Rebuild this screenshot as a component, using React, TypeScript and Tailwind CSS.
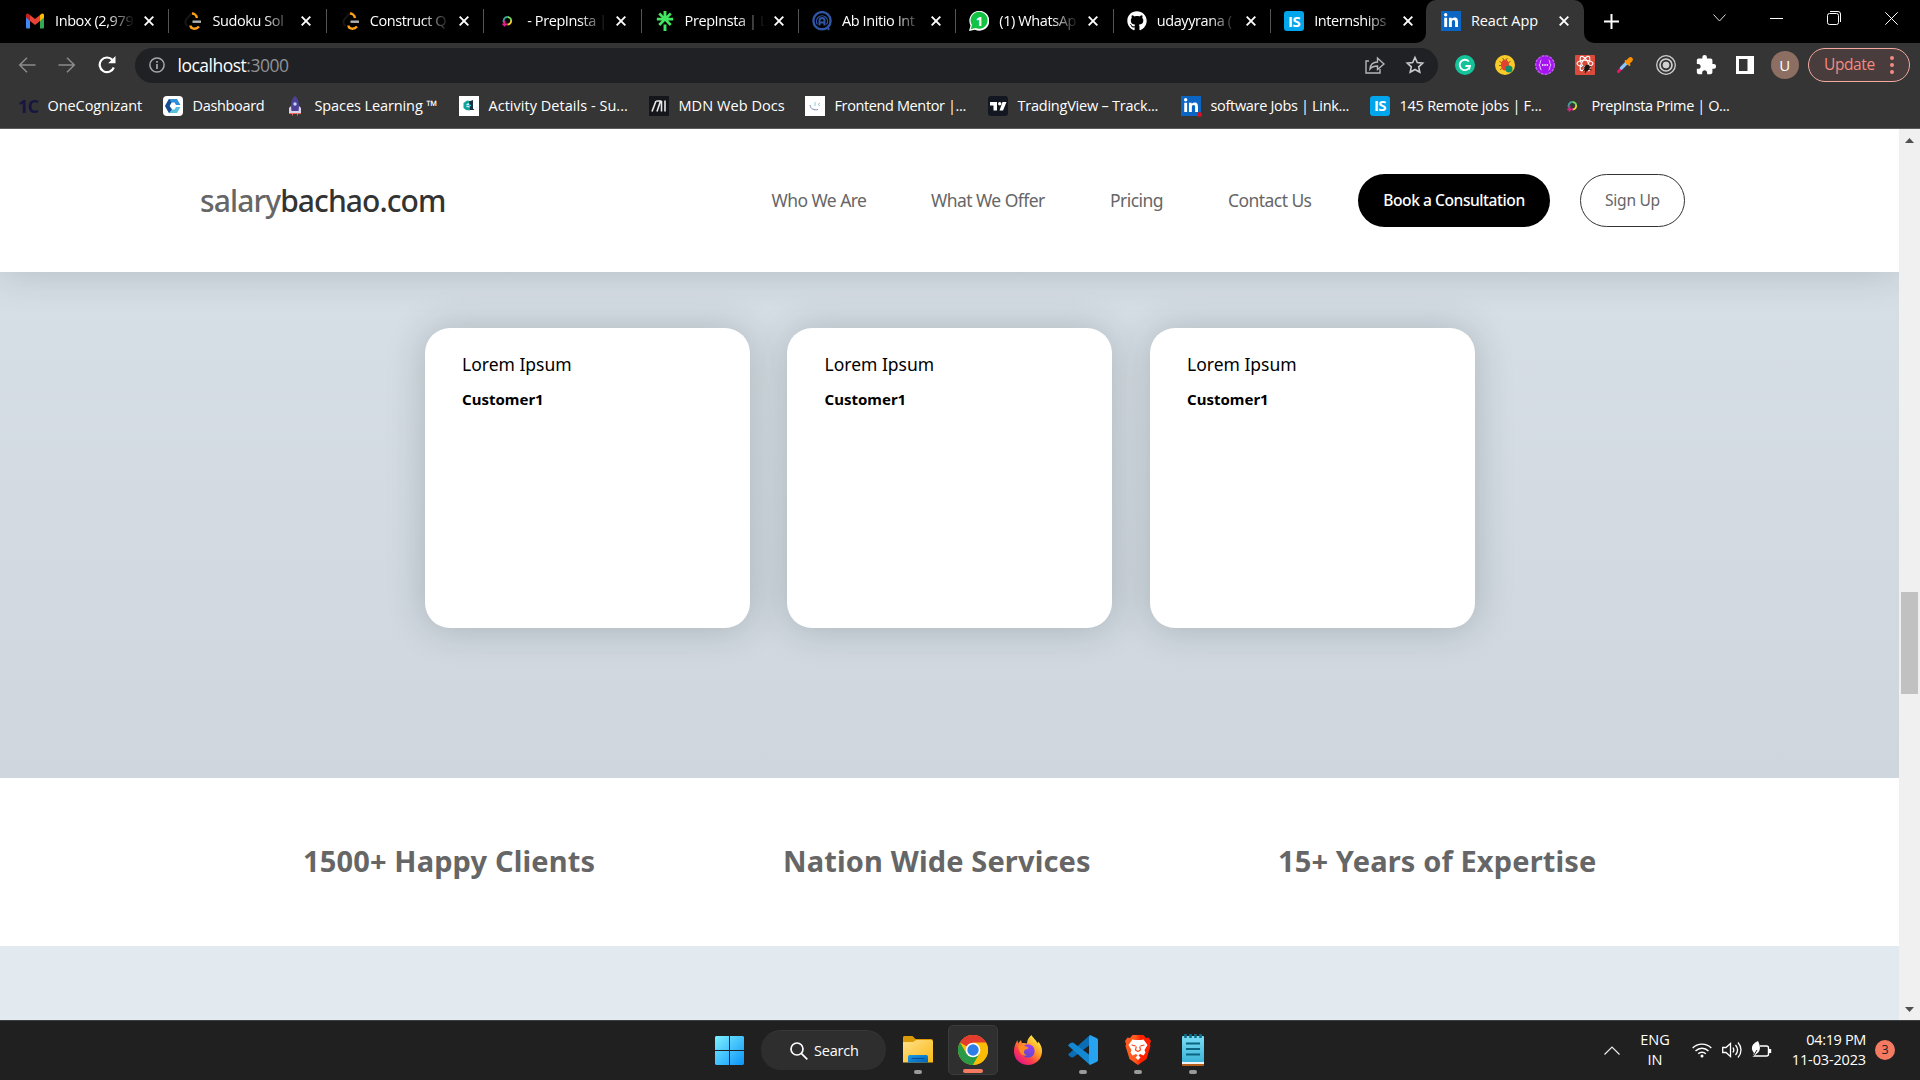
import type { ReactNode } from "react";
import { SiLinktree } from "react-icons/si";
import { FaGithub, FaLinkedinIn } from "react-icons/fa";
import { MdExtension } from "react-icons/md";

const ui = "font-['Open_Sans',sans-serif]";
const web = "font-['Noto_Sans',sans-serif]";

const Gmail = () => (
  <svg viewBox="0 0 20 16" className="h-4 w-5">
    <path d="M1 3.5V14.5a1 1 0 0 0 1 1h3V6z" fill="#4285f4" />
    <path d="M19 3.5V14.5a1 1 0 0 1-1 1h-3V6z" fill="#34a853" />
    <path d="M15 6V2l1.400-1C17.800 0 19 1 19 2.400V4.500L15 8z" fill="#fbbc04" />
    <path d="M5 8V2l5 4 5-4v6l-5 4z" fill="#ea4335" />
    <path d="M1 4.500V2.400C1 1 2.200 0 3.600 1L5 2v6z" fill="#c5221f" />
  </svg>
);

const LeetCode = () => (
  <svg viewBox="0 0 20 20" className="h-5 w-5" fill="none">
    <path d="M10 2 4.500 8C3 10.500 3 13 5.500 15" stroke="#161616" strokeWidth="2" />
    <path d="M10 2.500c2 0 4.500 1.500 5 4.500" stroke="#ffa116" strokeWidth="2.400" />
    <path d="M10.500 10.700h8.500" stroke="#b3b3b3" strokeWidth="2.400" />
    <path d="M8.500 14.500c0 3.500 5.500 4.500 8.500 1" stroke="#ffa116" strokeWidth="2.400" />
  </svg>
);

const Prep = () => (
  <svg viewBox="0 0 20 20" className="h-5 w-5" fill="none" strokeWidth="1.800">
    <path d="M7 11.500a3.800 3.800 0 0 1 3.500-5.500" stroke="#35a7a0" />
    <path d="M10.500 6a3.800 3.800 0 0 1 3.700 4" stroke="#7ed957" />
    <path d="M14.200 9.500a3.800 3.800 0 0 1-3.700 4" stroke="#f6d32d" />
    <path d="M11 13.300H5.300M7.500 9.500v6" stroke="#e0218a" />
  </svg>
);

const Linktree = () => <SiLinktree className="h-5 w-5 text-[#43e660]" />;

const Ambition = () => (
  <svg viewBox="0 0 20 20" className="h-5 w-5" fill="none" stroke="#3055a5">
    <circle cx="10" cy="9.700" r="8.600" strokeWidth="2.400" />
    <path d="M7.500 14.500V9.500a2.500 2.500 0 0 1 5 0v5M7.500 11.500h5" strokeWidth="2" />
    <path d="M5.500 13.500a5.500 5.500 0 1 1 9 0" strokeWidth="1.300" />
    <path d="M16 17l1 2" strokeWidth="2" />
  </svg>
);

const WhatsApp = () => (
  <span className="relative flex h-5 w-5 items-center justify-center">
    <svg viewBox="0 0 20 20" className="absolute h-5 w-5">
      <path d="M0 20 1.500 14.500A10 10 0 1 1 6 18.800z" fill="#fff" />
      <path d="M1.600 18.300 3 14A8.500 8.500 0 1 1 6.500 17z" fill="#13c143" />
    </svg>
    <b className="relative text-[13px] leading-none text-white">1</b>
  </span>
);

const Github = () => <FaGithub className="h-5 w-5 text-white" />;

const Internshala = () => (
  <span className="flex h-5 w-5 items-center justify-center rounded-[3px] bg-[#00a5ec] text-[15px] font-bold leading-none tracking-[-0.5px] text-white">
    IS
  </span>
);

const LinkedIn = ({ dot }: { dot?: boolean }) => (
  <span className="relative flex h-5 w-5 items-center justify-center bg-[#0a66c2]">
    <FaLinkedinIn className="h-4 w-4 text-white" />
    {dot && <span className="absolute -bottom-px -right-px h-[5px] w-[5px] rounded-full bg-[#d11124]" />}
  </span>
);

const Cross = ({ className }: { className: string }) => (
  <svg viewBox="0 0 10 10" className={className} stroke="#fff" strokeWidth="1.900">
    <path d="M.7.7l8.600 8.600M9.300.7.7 9.300" />
  </svg>
);

const tabs: { title: string; icon: ReactNode }[] = [
  { title: "Inbox (2,979", icon: <Gmail /> },
  { title: "Sudoku Sol", icon: <LeetCode /> },
  { title: "Construct Q", icon: <LeetCode /> },
  { title: "- PrepInsta |", icon: <Prep /> },
  { title: "PrepInsta | L", icon: <Linktree /> },
  { title: "Ab Initio Int", icon: <Ambition /> },
  { title: "(1) WhatsAp", icon: <WhatsApp /> },
  { title: "udayyrana (", icon: <Github /> },
  { title: "Internships", icon: <Internshala /> },
];

function TabStrip() {
  return (
    <div className="flex h-[43px] bg-black pl-[12px]">
      {tabs.map((t, i) => (
        <div key={i} className="flex w-[157.400px] shrink-0 items-center pb-px pl-[13px]">
          <span className="flex w-5 justify-center">{t.icon}</span>
          <span className="ml-[10px] w-[80px] whitespace-nowrap text-[14.500px] tracking-[-0.4px] [mask-image:linear-gradient(to_right,black_65%,transparent_100%)]">
            {t.title}
          </span>
          <Cross className="ml-[9px] h-[10px] w-[10px]" />
          <span className={i < 8 ? "ml-auto h-6 w-px bg-[#555]" : "hidden"} />
        </div>
      ))}
      <div className="relative ml-[-2.600px] flex w-[158px] shrink-0 items-center rounded-t-[10px] bg-[#353535] pb-px pl-[15px]">
        <svg viewBox="0 0 10 10" className="absolute -left-[10px] bottom-0 h-[10px] w-[10px]" fill="#353535">
          <path d="M10 0v10H0A10 10 0 0 0 10 0" />
        </svg>
        <svg viewBox="0 0 10 10" className="absolute -right-[10px] bottom-0 h-[10px] w-[10px]" fill="#353535">
          <path d="M0 0v10h10A10 10 0 0 1 0 0" />
        </svg>
        <LinkedIn />
        <span className="ml-[10px] w-[88px] whitespace-nowrap text-[14.500px] tracking-[-0.1px]">React App</span>
        <Cross className="h-[10px] w-[10px]" />
      </div>
      <div className="flex grow items-center">
        <svg viewBox="0 0 15 15" className="ml-[20px] h-[15px] w-[15px]" stroke="#fff" strokeWidth="2">
          <path d="M7.500 0v15M0 7.500h15" />
        </svg>
        <div className="mb-[7px] ml-auto mr-[22px] flex w-[185px] items-center justify-between">
          <svg viewBox="0 0 13 8" className="h-2 w-[13px]" fill="none" stroke="#ddd">
            <path d="M.5.5l6 6.500 6-6.500" />
          </svg>
          <span className="h-px w-[13px] bg-white" />
          <svg viewBox="0 0 14 14" className="h-[14px] w-[14px]" fill="none" stroke="#fff">
            <rect x=".5" y="2.500" width="11" height="11" rx="2" />
            <path d="M3 .5h8a2.500 2.500 0 0 1 2.500 2.500v8" />
          </svg>
          <svg viewBox="0 0 13 13" className="h-[13px] w-[13px]" stroke="#fff">
            <path d="M.3.3l12.400 12.400M12.700.3.3 12.700" />
          </svg>
        </div>
      </div>
    </div>
  );
}

const extensions: ReactNode[] = [
  <svg viewBox="0 0 20 20" className="h-5 w-5">
    <circle cx="10" cy="10" r="10" fill="#15c39a" />
    <path d="M13.800 6.500A5.200 5.200 0 1 0 15 11h-4.500M15 11l-1 3.500" fill="none" stroke="#fff" strokeWidth="1.800" />
  </svg>,
  <svg viewBox="0 0 20 20" className="h-5 w-5">
    <circle cx="10" cy="10" r="10" fill="#f9cb28" />
    <path d="M4.500 6.500l3 1.500M4 10.500h3M5 15l2.500-2M15.500 6.500l-3 1.500M7.500 3l1.500 2M12.500 3l-1.500 2" stroke="#8b5a2b" />
    <ellipse cx="10" cy="10" rx="4" ry="5.500" fill="#e0432f" />
    <circle cx="14" cy="14" r="3.500" fill="#0c8f68" />
    <circle cx="12.500" cy="12" r="1.200" fill="#0c8f68" />
  </svg>,
  <svg viewBox="0 0 20 20" className="h-5 w-5">
    <circle cx="10" cy="10" r="9.300" fill="#a414ef" stroke="#c05af5" strokeWidth="1.400" strokeDasharray="3 1" />
    <path d="M6.500 5C4.500 5 6 9 4 10c2 1 .5 5 2.500 5M13.500 5c2 0 .5 4 2.500 5-2 1-.5 5-2.500 5" fill="none" stroke="#e5c7ff" />
    <path d="M7 10h1.500M9.300 10h1.500M11.600 10h1.500" stroke="#fff" strokeWidth="1.500" />
  </svg>,
  <svg viewBox="0 0 20 20" className="h-5 w-5">
    <rect width="20" height="20" rx="1" fill="#dc4a3a" />
    <g fill="none" stroke="#fff" strokeWidth="1.100">
      <ellipse cx="10" cy="8.500" rx="8" ry="3.200" />
      <ellipse cx="10" cy="8.500" rx="8" ry="3.200" transform="rotate(60 10 8.500)" />
      <ellipse cx="10" cy="8.500" rx="8" ry="3.200" transform="rotate(120 10 8.500)" />
    </g>
    <ellipse cx="12" cy="13" rx="2.500" ry="3.500" fill="#1d1311" transform="rotate(25 12 13)" />
    <path d="M7.500 11.500l9 3.500M8 15.500l8-4M10 18l3-8" stroke="#1d1311" />
  </svg>,
  <svg viewBox="0 0 20 20" className="h-5 w-5" strokeLinecap="round">
    <path d="M3.500 16.500l2.500-3" stroke="#e5186a" strokeWidth="3" />
    <path d="M6.500 13l5-5" stroke="#8fc4ff" strokeWidth="3.200" />
    <path d="M13 7l2.500-2.500" stroke="#ff9100" strokeWidth="4.800" />
    <path d="M10.500 6l4 4" stroke="#ff9100" strokeWidth="1.800" />
  </svg>,
  <svg viewBox="0 0 20 20" className="h-5 w-5" fill="none" stroke="#d0d0d0">
    <circle cx="10" cy="10" r="9.300" strokeWidth="1.300" />
    <circle cx="10" cy="10" r="6" strokeWidth="1.700" />
    <circle cx="10" cy="10" r="3" fill="#d0d0d0" />
  </svg>,
  <MdExtension className="h-[22px] w-[22px] text-white" />,
  <svg viewBox="0 0 18 18" className="mr-[2px] h-[18px] w-[18px]">
    <path d="M0 0h18v18H0zM3 3v12h8.500V3z" fill="#fff" fillRule="evenodd" />
  </svg>,
];

function Toolbar() {
  return (
    <div className="flex h-[44px] items-center bg-[#353535] pl-[18px] pr-[10px]">
      <svg viewBox="0 0 18 16" className="h-4 w-[18px]" fill="none" stroke="#8b8b8b" strokeWidth="1.500">
        <path d="M17.500 8H2M9 .8 1.700 8 9 15.200" />
      </svg>
      <svg viewBox="0 0 18 16" className="ml-[22px] h-4 w-[18px]" fill="none" stroke="#8b8b8b" strokeWidth="1.500">
        <path d="M.5 8H16M9 .8 16.300 8 9 15.200" />
      </svg>
      <svg viewBox="0 0 18 18" className="ml-[22px] h-[18px] w-[18px]" fill="none" stroke="#fff" strokeWidth="2.200">
        <path d="M15.800 11.500A7.300 7.300 0 1 1 14.500 4" />
        <path d="M17.500 0v7.300h-7.300z" fill="#fff" stroke="none" />
      </svg>
      <div className="ml-[19px] flex h-[35px] w-[1303px] shrink-0 items-center rounded-full bg-[#202124] pl-[14px] pr-[13px]">
        <svg viewBox="0 0 16 16" className="h-4 w-4" fill="none" stroke="#a5a8ac">
          <circle cx="8" cy="8" r="7.100" strokeWidth="1.500" />
          <path d="M8 7v5M8 4v1.700" strokeWidth="1.700" />
        </svg>
        <span className="ml-[12.500px] text-[17.500px] tracking-[-0.500px] text-white">
          localhost<span className="text-[#909296]">:3000</span>
        </span>
        <svg viewBox="0 0 20 18" className="ml-auto h-[18px] w-5" fill="none" stroke="#b5b7ba" strokeWidth="1.400">
          <path d="M4 5H1v12h14v-4" />
          <path d="M5 13c.5-5 3.500-7 7.500-7V2l6.500 6-6.500 5.500V10C9.500 10 7 10.500 5 13z" />
        </svg>
        <svg viewBox="0 0 20 20" className="ml-[20px] h-5 w-5" fill="none" stroke="#c8cacd" strokeWidth="1.600">
          <path d="M10 2.500l2.300 5 5.400.6-4 3.700 1.100 5.400-4.800-2.700-4.800 2.700 1.100-5.400-4-3.700 5.400-.6z" />
        </svg>
      </div>
      <div className="ml-[7px] flex">
        {extensions.map((e, i) => (
          <span key={i} className="flex w-[40.100px] items-center justify-center">
            {e}
          </span>
        ))}
      </div>
      <span className="ml-[5px] flex h-7 w-7 shrink-0 items-center justify-center rounded-full bg-[#8d6e63] text-[15px] text-white">
        U
      </span>
      <div className="ml-auto flex h-[34px] w-[102px] shrink-0 items-center rounded-full border border-[#f1a9a0] bg-[#493c3c] pl-[15px] text-[15.500px] tracking-[-0.4px] text-[#f28b82]">
        Update
        <span className="ml-auto mr-[15px] flex flex-col gap-[3px]">
          <i className="h-1 w-1 rounded-full bg-[#f28b82]" />
          <i className="h-1 w-1 rounded-full bg-[#f28b82]" />
          <i className="h-1 w-1 rounded-full bg-[#f28b82]" />
        </span>
      </div>
    </div>
  );
}

const bookmarks: { w: string; title: string; icon: ReactNode }[] = [
  {
    w: "w-[145px] tracking-[-0.07px]",
    title: "OneCognizant",
    icon: <span className="text-[18px] font-bold leading-none tracking-[-1px] text-[#15153f]">1C</span>,
  },
  {
    w: "w-[122px] tracking-[-0.33px]",
    title: "Dashboard",
    icon: (
      <svg viewBox="0 0 20 20" className="h-5 w-5">
        <rect width="20" height="20" rx="4" fill="#fff" />
        <path d="M6 3h8l3.500 6H13l-1.500-2.500H8.500L6.500 10 2 10z" fill="#2f8fd8" />
        <path d="M2 10l4 7h8l3.500-6H13l-1.500 2.500H9L6.500 10z" fill="#58c1e0" />
        <path d="M6 3 2 10l4 7 3-3.500L6.500 10l2-3.500z" fill="#1a4c94" />
      </svg>
    ),
  },
  {
    w: "w-[174px] tracking-[-0.1px]",
    title: "Spaces Learning ™",
    icon: (
      <svg viewBox="0 0 20 20" className="h-5 w-5">
        <path d="M4 18v-6l3-3h6l3 3v6z" fill="#d8d3ea" />
        <path d="M10 0c4 3.500 4.500 8 3.500 15h-7C5.500 8 6 3.500 10 0z" fill="#4f4096" />
        <circle cx="10" cy="8" r="1.700" fill="#b9d8ff" />
        <path d="M4 17.500h12M7.500 17.500v2M12.500 17.500v2" stroke="#e96a5a" />
      </svg>
    ),
  },
  {
    w: "w-[190px] tracking-[0.03px]",
    title: "Activity Details - Su...",
    icon: (
      <svg viewBox="0 0 20 20" className="h-5 w-5">
        <rect width="20" height="20" fill="#fff" />
        <path d="M4.500 7 8 4.500l3 .5v2L7.500 8v3l3.500.5v3l-4-.5L4.500 12z" fill="#14a39a" />
        <path d="M10 5.500 14 4v8.500l1.500 1.500H11z" fill="#17323f" />
        <path d="M7 9.500h5" stroke="#2bc0d8" strokeWidth="1.500" />
      </svg>
    ),
  },
  {
    w: "w-[156px] tracking-[0.07px]",
    title: "MDN Web Docs",
    icon: (
      <svg viewBox="0 0 20 20" className="h-5 w-5" stroke="#e8e8e8" strokeWidth="1.600" fill="none">
        <rect width="20" height="20" fill="#15151c" stroke="none" />
        <path d="M3 15.500 7 5M8 15.500 11.500 5 7.300 5M12.500 15.500V5M16 4.500v11" />
      </svg>
    ),
  },
  {
    w: "w-[183px] tracking-[-0.38px]",
    title: "Frontend Mentor |...",
    icon: (
      <svg viewBox="0 0 20 20" className="h-5 w-5" fill="none">
        <rect width="20" height="20" fill="#fff" />
        <path d="M5 9c.5 4 4 5.500 8 4.500" stroke="#7e86b8" />
        <path d="M10 6v4M15 7l-2 1.500 2 1.500" stroke="#8fd0d8" />
      </svg>
    ),
  },
  {
    w: "w-[193px] tracking-[-0.23px]",
    title: "TradingView – Track...",
    icon: (
      <svg viewBox="0 0 20 20" className="h-5 w-5" fill="#fff">
        <rect width="20" height="20" rx="3" fill="#131722" />
        <path d="M2 6h7v8.500H5.500V9.500H2zM14.500 6H18.500L15 14.500h-3.500z" />
        <circle cx="11.700" cy="7.700" r="1.700" />
      </svg>
    ),
  },
  { w: "w-[189px] tracking-[-0.32px]", title: "software Jobs | Link...", icon: <LinkedIn dot /> },
  { w: "w-[192px] tracking-[-0.25px]", title: "145 Remote jobs | F...", icon: <Internshala /> },
  { w: "w-[192px] tracking-[-0.4px]", title: "PrepInsta Prime | O...", icon: <Prep /> },
];

function BookmarkBar() {
  return (
    <div className="flex h-[42px] items-center border-b border-[#5c5c5c] bg-[#353535] pb-[4px] pl-[18px]">
      {bookmarks.map((b) => (
        <div key={b.title} className={"flex shrink-0 items-center whitespace-nowrap text-[14.500px] leading-5 " + b.w}>
          <span className="mr-[9.500px] flex w-5 shrink-0 justify-center">{b.icon}</span>
          {b.title}
        </div>
      ))}
    </div>
  );
}

function SiteHeader() {
  return (
    <header className="relative flex h-[143px] shrink-0 items-center bg-white pl-[200px] text-[#666] shadow-[0_0_38px_rgba(20,40,35,0.2)]">
      <div className="w-[571.500px] text-[30px] font-medium tracking-[-0.9px]">
        salary<span className="text-[#333]">bachao.com</span>
      </div>
      <nav className="flex text-[17.500px] tracking-[-0.56px]">
        <a className="w-[159.500px]">Who We Are</a>
        <a className="w-[179px]">What We Offer</a>
        <a className="w-[118px]">Pricing</a>
        <a className="w-[130px]">Contact Us</a>
      </nav>
      <button className="h-[53px] w-[192px] rounded-full bg-black text-[15.600px] font-medium tracking-[-0.46px] text-white">
        Book a Consultation
      </button>
      <button className="ml-[30px] h-[53px] w-[105px] rounded-full border border-[#333] text-[15.600px] tracking-[-0.3px]">
        Sign Up
      </button>
    </header>
  );
}

function Page() {
  return (
    <div className={"flex h-[891px] " + web}>
      <main className="flex w-[1899px] flex-col overflow-hidden">
        <SiteHeader />
        <section className="flex h-[506px] justify-center gap-[37.500px] bg-linear-to-b from-[#d7dfe6] to-[#cfd6de] pt-[56px]">
          {[0, 1, 2].map((i) => (
            <article
              key={i}
              className="h-[300px] w-[325px] rounded-[25px] bg-white px-[37.500px] pt-[23px] text-black shadow-[0_0_38px_rgba(20,40,35,0.22)]"
            >
              <p className="text-[17.500px] leading-[26px]">Lorem Ipsum</p>
              <p className="mt-[10px] text-[15px] font-bold leading-[24px]">Customer1</p>
            </article>
          ))}
        </section>
        <section className="flex h-[168px] items-center bg-white pb-[2px] pl-[303px] text-[29px] font-bold tracking-[0.14px] text-[#666]">
          <h2 className="w-[480px]">1500+ Happy Clients</h2>
          <h2 className="w-[495px]">Nation Wide Services</h2>
          <h2>15+ Years of Expertise</h2>
        </section>
        <section className="grow bg-[#e2eaf0]" />
      </main>
      <aside className="flex w-[21px] flex-col items-center bg-[#f0f0f0]">
        <svg viewBox="0 0 9 5" className="mt-[9px] h-[5px] w-[9px]" fill="#505050">
          <path d="M0 5 4.500 0 9 5z" />
        </svg>
        <span className="mt-[449px] h-[102px] w-[17px] bg-[#c1c1c1]" />
        <svg viewBox="0 0 9 5" className="mb-[8px] mt-auto h-[5px] w-[9px]" fill="#505050">
          <path d="M0 0 4.500 5 9 0z" />
        </svg>
      </aside>
    </div>
  );
}

const Folder = () => (
  <svg viewBox="0 0 30 28" className="h-7 w-[30px]">
    <defs>
      <linearGradient id="fold" x1="0" y1="0" x2="1" y2="1">
        <stop stopColor="#ffe08a" />
        <stop offset="1" stopColor="#fbb914" />
      </linearGradient>
      <linearGradient id="foldBlue" x1="0" y1="0" x2="1" y2="1">
        <stop stopColor="#1a9be8" />
        <stop offset="1" stopColor="#0063b8" />
      </linearGradient>
    </defs>
    <path d="M0 1.500C0 .7.700 0 1.500 0H9.500l3 3H28c1 0 2 .7 2 2v5H0z" fill="#dd9a08" />
    <path d="M0 6H10l3-2h15.500L30 5.500V26.500H0z" fill="url(#fold)" />
    <path d="M5 26.500V21c0-1.500 1-2 2-2h16c1 0 2 .5 2 2v5.500z" fill="url(#foldBlue)" />
    <path d="M8.500 22.500h13" stroke="#0b4f96" strokeWidth="1.200" />
  </svg>
);

const Chrome = () => (
  <svg viewBox="0 0 30 30" className="h-[30px] w-[30px]">
    <circle cx="15" cy="15" r="15" fill="#fbbc05" />
    <path d="M15 15 2 7.500A15 15 0 0 1 28 7.500z" fill="#e33b2e" />
    <path d="M2 7.500A15 15 0 0 0 15 30l6.500-11.250L8.500 18.750z" fill="#2a9a48" />
    <path d="M15 7.500h13A15 15 0 0 1 15 30l6.500-11.250z" fill="#fbbc05" />
    <circle cx="15" cy="15" r="7.300" fill="#fff" />
    <circle cx="15" cy="15" r="5.700" fill="#2f7de9" />
  </svg>
);

const Firefox = () => (
  <svg viewBox="0 0 30 30" className="h-[30px] w-[30px]">
    <defs>
      <linearGradient id="ffx" x1=".85" y1=".1" x2=".2" y2=".95">
        <stop stopColor="#fff24a" />
        <stop offset=".4" stopColor="#ff9a22" />
        <stop offset=".7" stopColor="#ff3d4d" />
        <stop offset="1" stopColor="#e31587" />
      </linearGradient>
      <linearGradient id="ffp" x1=".7" y1="0" x2=".3" y2="1">
        <stop stopColor="#a23cf5" />
        <stop offset="1" stopColor="#5b4bc4" />
      </linearGradient>
    </defs>
    <path
      d="M18.500 0c1 2.500 4.500 4.500 6 8.500l.5-2c3 3 4.300 6.500 4 10.500C28.500 24.500 22.500 30 15 30S1 24.500 1 16.500c0-4 1-7.500 3.500-11.500l.5 3.500L8 5l.8 3.300C10.500 7.700 12.500 8 14 8.500c0-3.500 2-6.500 4.500-8.500z"
      fill="url(#ffx)"
    />
    <circle cx="15" cy="16" r="6.700" fill="url(#ffp)" />
    <path d="M5 11c3-2 6-.5 9 1 2 .2 2 1.500 0 2-2 .3-3 1.500-3 3 0 2 1 3 3 3-4 2-8-1-9-9z" fill="#ff8b22" />
  </svg>
);

const VsCode = () => (
  <svg viewBox="0 0 30 30" className="h-[30px] w-[30px]">
    <path d="M22 0 0 19.500 2.500 22 5 22.500 23 9z" fill="#0b6db5" />
    <path d="M22 30 0 10.500 2.500 8 5 7.500 23 21z" fill="#1488d0" />
    <path d="M22 0l6.500 3c1 .5 1.500 1.300 1.500 2.300v19.400c0 1-.5 1.800-1.500 2.300L22 30l-1-2V2z" fill="#28a3f0" />
  </svg>
);

const Brave = () => (
  <svg viewBox="0 0 26 30" className="h-[30px] w-[26px]">
    <defs>
      <linearGradient id="brv">
        <stop offset=".4" stopColor="#ff5a1f" />
        <stop offset=".6" stopColor="#ff2000" />
      </linearGradient>
    </defs>
    <path d="M7.500 0h11L21 3l2.500-.5L26 6l-1 3 .5 2-4 13-8.500 6-8.500-6-4-13L1 9 0 6l2.500-3.500L5 3z" fill="url(#brv)" />
    <path
      d="M7.500 4.500 10 5h6l2.500-.5 4 5.500-3 5 1 2.500-2 3-3.500-1.500-1.500 1.500 2 2L13 25l-2.500-2.500 2-2L11 19l-3.500 1.500-2-3 1-2.500-3-5z"
      fill="#fff"
    />
    <path
      d="M6.500 10l4 .8M19.500 10l-4 .8M11.300 11.500l-.8 3.500 2.500 1.500 2.500-1.500-.8-3.500"
      stroke="#fb4a1e"
      strokeWidth="1.200"
      fill="none"
    />
  </svg>
);

const Notepad = () => (
  <svg viewBox="0 0 22 32" className="h-8 w-[22px]">
    <defs>
      <linearGradient id="ntp" x1="0" y1="0" x2="0" y2="1">
        <stop stopColor="#7bdcf5" />
        <stop offset="1" stopColor="#3cb4d8" />
      </linearGradient>
    </defs>
    <rect y="23" width="22" height="9" rx="1" fill="#b4601c" />
    <rect y="22" width="22" height="8" fill="#eef3f5" />
    <rect y="2" width="22" height="26" rx="1" fill="url(#ntp)" />
    <path d="M4 9.500h14M4 15h14M4 20.500h14" stroke="#0b6580" strokeWidth="1.900" />
    <path d="M3.500 0v4M8.500 0v4M13.500 0v4M18.500 0v4" stroke="#0e6f8c" strokeWidth="2.600" />
  </svg>
);

const apps: { icon: ReactNode; mark: string; box: string }[] = [
  { icon: <Folder />, mark: "w-2 bg-[#9a9a9a]", box: "" },
  { icon: <Chrome />, mark: "w-5 bg-[#f47b62]", box: "rounded-[5px] border border-[#3b3b3b] bg-[#2f2f2f]" },
  { icon: <Firefox />, mark: "w-2 bg-transparent", box: "" },
  { icon: <VsCode />, mark: "w-2 bg-[#9a9a9a]", box: "" },
  { icon: <Brave />, mark: "w-2 bg-[#9a9a9a]", box: "" },
  { icon: <Notepad />, mark: "w-2 bg-[#9a9a9a]", box: "" },
];

function Taskbar() {
  return (
    <footer className="flex h-[60px] items-center border-t border-[#3d4042] bg-[#202020] pb-px pl-[715px] text-white">
      <svg viewBox="0 0 29 29" className="h-[29px] w-[29px]">
        <defs>
          <linearGradient id="win" gradientUnits="userSpaceOnUse" x1="0" y1="0" x2="29" y2="29">
            <stop stopColor="#7df0ff" />
            <stop offset="1" stopColor="#0a94f8" />
          </linearGradient>
        </defs>
        <path d="M1 0h13v14H0V1zM15 0h13l1 1v13H15zM0 15h14v14H1l-1-1zM15 15h14v13l-1 1H15z" fill="url(#win)" />
      </svg>
      <div className="ml-[17px] flex h-10 w-[125px] items-center rounded-full border-t border-[#383838] bg-[#2e2e2e] pl-[29px]">
        <svg viewBox="0 0 18 18" className="h-[18px] w-[18px]" fill="none" stroke="#fff" strokeWidth="1.700">
          <circle cx="7" cy="7" r="6" />
          <path d="M11.300 11.300l6 6" />
        </svg>
        <span className="ml-[6px] text-[14.500px] tracking-[-0.2px]">Search</span>
      </div>
      <div className="ml-[7px] flex gap-[5px]">
        {apps.map((a, i) => (
          <div key={i} className={"relative flex h-[50px] w-[50px] items-center justify-center " + a.box}>
            {a.icon}
            <span className={"absolute bottom-px h-1 rounded-full " + a.mark} />
          </div>
        ))}
      </div>
      <div className="ml-auto flex items-center text-[14.500px] leading-5">
        <svg viewBox="0 0 16 9" className="h-[9px] w-4" fill="none" stroke="#eee" strokeWidth="1.200">
          <path d="M.5 8.500 8 1l7.500 7.500" />
        </svg>
        <div className="ml-[15px] w-[40px] text-center">
          <p>ENG</p>
          <p>IN</p>
        </div>
        <svg viewBox="0 0 20 16" className="ml-[17px] h-4 w-5" fill="none" stroke="#fff" strokeWidth="1.400">
          <path d="M.7 6a13 13 0 0 1 18.600 0M3.500 9a9 9 0 0 1 13 0M6.200 11.800a5.300 5.300 0 0 1 7.600 0" />
          <circle cx="10" cy="14" r="1.500" fill="#fff" stroke="none" />
        </svg>
        <svg viewBox="0 0 20 18" className="ml-[10px] h-[18px] w-5" fill="none" stroke="#fff" strokeWidth="1.300">
          <path d="M.7 6.500v5H4L8.500 15.500v-13L4 6.500z" />
          <path d="M11 6.500c1 1.500 1 3.500 0 5M13.500 4c2.500 3 2.500 7 0 10M16 1.500c4 4.500 4 10.500 0 15" />
        </svg>
        <svg viewBox="0 0 21 18" className="ml-[9px] h-[18px] w-[21px]" fill="none" stroke="#fff" strokeWidth="1.400">
          <path d="M9 5h6.500a2 2 0 0 1 2 2v6a2 2 0 0 1-2 2H2" />
          <path d="M18 8h2.200v4H18z" fill="#fff" stroke="none" />
          <path d="M7 0c2.500 5 3 9.500-1 12.500L1.500 16l1.500-4C-.5 8 0 3 7 0z" fill="#fff" stroke="none" />
          <path d="M2 15.500 6 9" stroke="#202020" strokeWidth="1" />
        </svg>
        <div className="ml-[20px] flex w-[74px] flex-col items-end whitespace-nowrap">
          <p className="tracking-[-0.35px]">04:19 PM</p>
          <p className="tracking-[-0.15px]">11-03-2023</p>
        </div>
        <span className="ml-[9px] mr-[25px] flex h-5 w-5 items-center justify-center rounded-full bg-[#f47b62] text-[12.500px] text-[#202020]">
          3
        </span>
      </div>
    </footer>
  );
}

export default function App() {
  return (
    <div className={"h-[1080px] w-[1920px] overflow-hidden text-white " + ui}>
      <TabStrip />
      <Toolbar />
      <BookmarkBar />
      <Page />
      <Taskbar />
    </div>
  );
}
